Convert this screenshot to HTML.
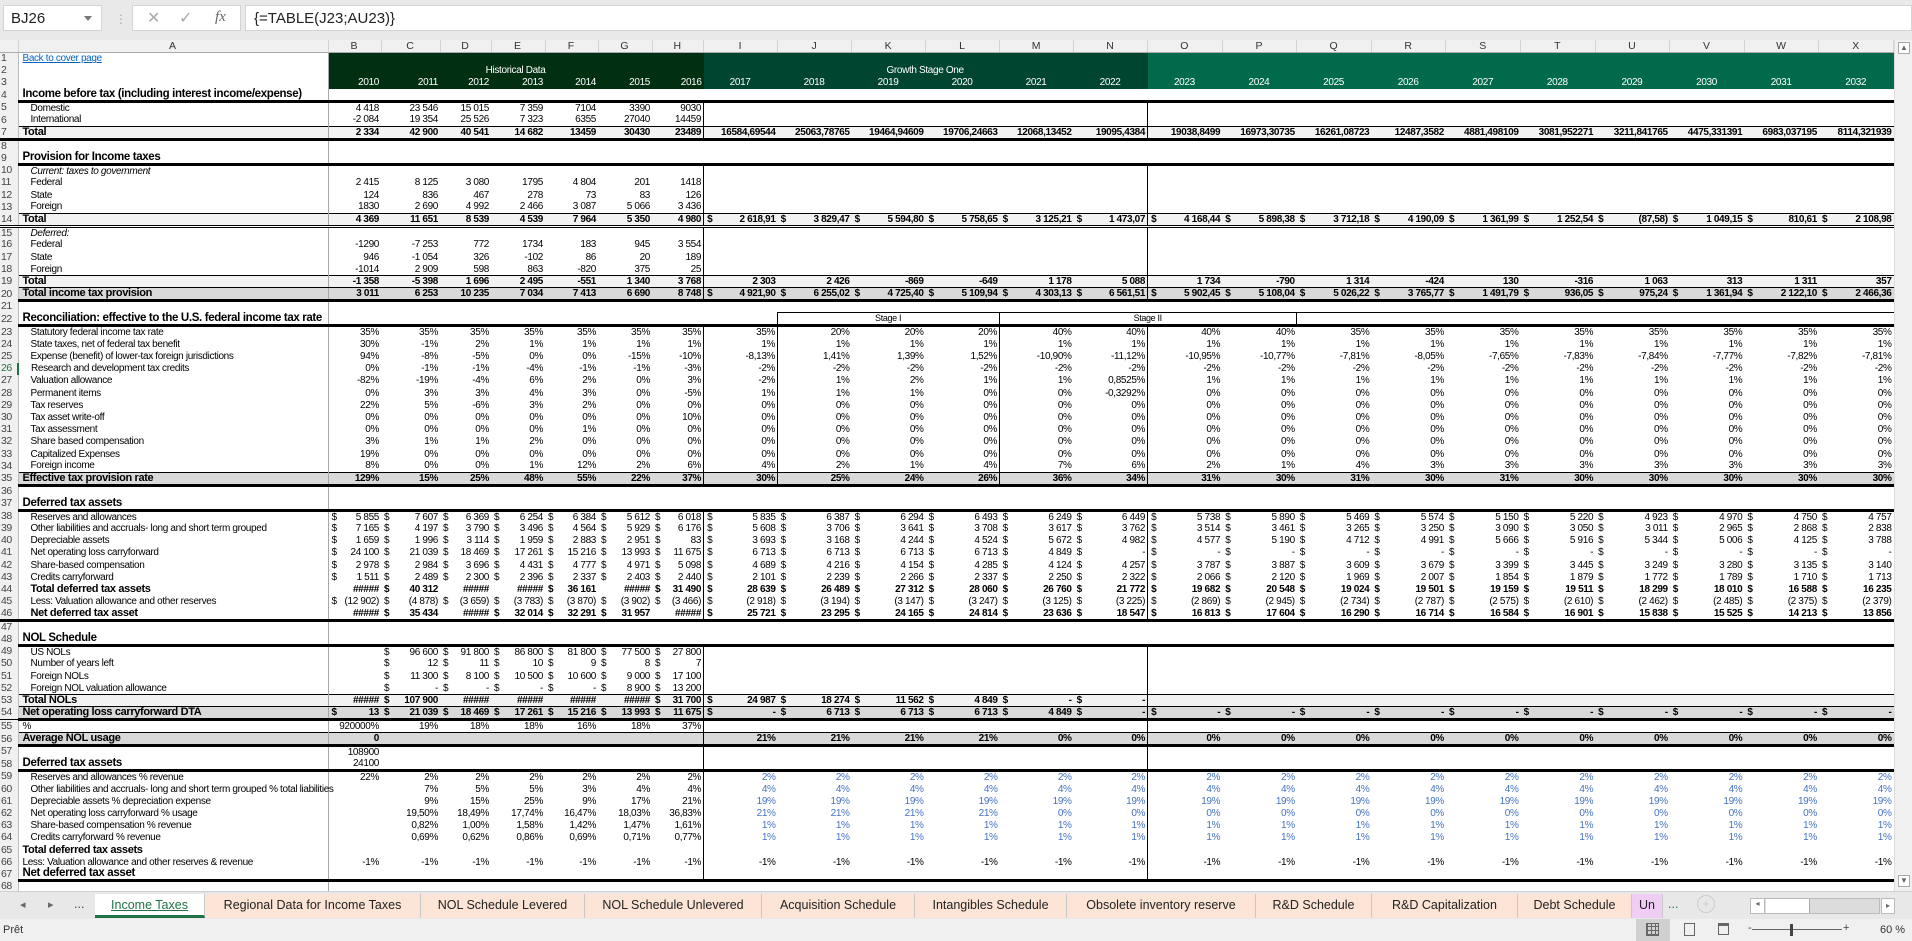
<!DOCTYPE html>
<html><head><meta charset="utf-8">
<style>
*{box-sizing:border-box;margin:0;padding:0}
body{width:1912px;height:941px;overflow:hidden;background:#fff;position:relative;font-family:"Liberation Sans Narrow","Liberation Sans",sans-serif}
#fb{position:absolute;left:0;top:0;width:1912px;height:40px;background:#e9e9e9}
#nb{position:absolute;left:3px;top:5px;width:99px;height:26px;background:#fff;border:1px solid #d4d4d4;font:15px "Liberation Sans",sans-serif;color:#222;padding:4px 0 0 7px}
#nb:after{content:"";position:absolute;right:9px;top:10px;border:4px solid transparent;border-top:5px solid #777}
#dots{position:absolute;left:115px;top:12px;color:#aaa;font:12px "Liberation Sans"}
#btns{position:absolute;left:132px;top:5px;width:109px;height:26px;background:#fff;border:1px solid #d4d4d4;color:#aaa;font:16px "Liberation Sans"}
#fx{position:absolute;left:245px;top:5px;width:1667px;height:26px;background:#fff;border:1px solid #d4d4d4;font:15px "Liberation Sans",sans-serif;color:#222;padding:4px 0 0 8px}
table{position:absolute;left:0;top:40px;border-collapse:collapse;table-layout:fixed;font-size:10px;width:1893.6px;letter-spacing:-0.35px}
td{height:12.2px;padding:0 2px 0 1px;white-space:nowrap;overflow:hidden;text-align:right;line-height:11px;color:#000}
thead td{height:12px;background:#f0f0f0;text-align:center;color:#333;font:10.5px "Liberation Sans",sans-serif;border-bottom:1px solid #ababab;border-right:1px solid #d4d4d4;line-height:12px;letter-spacing:0}
td.rh{background:#f0f0f0;text-align:left;color:#444;border-right:1px solid #bdbdbd;font-size:10.5px;padding-left:1px;border-top:none!important;border-bottom:none!important;letter-spacing:-0.5px}
tbody td:nth-child(2){border-right:1px solid #a8a8a8}
td.a{text-align:left;padding-left:4px;overflow:visible}
td.b{text-align:left;padding-left:12px;overflow:visible}
td.it{font-style:italic}
tr.hd td.a{font-weight:bold;font-size:11.5px}
tr.hd td:not(.rh){border-bottom:3px solid #000}
tr.t td:not(.rh){background:#f2f2f2;font-weight:bold;border-top:1px solid #000;border-bottom:1px solid #000}
tr.T td:not(.rh){background:#d9d9d9;font-weight:bold;border-bottom:3px solid #000;border-top:1px solid #000}
tr.t td.a,tr.T td.a{font-size:11px}
tr.v td:nth-child(10),tr.v td:nth-child(16){border-left:1px solid #000}
tr.r td:nth-child(10),tr.r td:nth-child(11),tr.r td:nth-child(14),tr.r td:nth-child(16){border-left:1px solid #000}
.g1{background:#002f12;color:#fff}.g2{background:#004530;color:#fff}.g3{background:#006a4a;color:#fff}
.gc{text-align:center}
i{font-style:normal;float:left;padding-left:2px}
.bl{color:#4472c4}
u{color:#0563c1}
#tabs{position:absolute;left:0;top:891px;width:1912px;height:28px;background:#e8e8e8;border-top:1px solid #d0d0d0;font:12.5px "Liberation Sans",sans-serif}
.tab{position:absolute;top:2px;height:24px;background:#fce4d6;color:#222;text-align:center;line-height:23px;border-right:1px solid #c8c8c8;white-space:nowrap;overflow:hidden}
#sb{position:absolute;left:0;top:919px;width:1912px;height:22px;background:#f0f0f0;font:11px "Liberation Sans",sans-serif;color:#333}
#vs{position:absolute;left:1894px;top:40px;width:18px;height:851px;background:#f0f0f0;border-left:1px solid #ddd}
</style></head><body>
<div id="fb"><div id="nb">BJ26</div><div id="dots">⋮</div><div id="btns"><span style="position:absolute;left:14px;top:2px">✕</span><span style="position:absolute;left:46px;top:2px">✓</span><span style="position:absolute;left:82px;top:3px;font:italic 15px 'Liberation Serif';color:#666">fx</span></div><div id="fx">{=TABLE(J23;AU23)}</div></div>
<table>
<colgroup><col style="width:18px"><col style="width:310px"><col style="width:53px"><col style="width:59px"><col style="width:51px"><col style="width:54px"><col style="width:53px"><col style="width:54px"><col style="width:51.6px"><col style="width:74px"><col style="width:74px"><col style="width:74px"><col style="width:74px"><col style="width:74px"><col style="width:74px"><col style="width:74.6px"><col style="width:74.6px"><col style="width:74.6px"><col style="width:74.6px"><col style="width:74.6px"><col style="width:74.6px"><col style="width:74.6px"><col style="width:74.6px"><col style="width:74.6px"><col style="width:74.6px"></colgroup>
<thead><tr><td></td><td>A</td><td>B</td><td>C</td><td>D</td><td>E</td><td>F</td><td>G</td><td>H</td><td>I</td><td>J</td><td>K</td><td>L</td><td>M</td><td>N</td><td>O</td><td>P</td><td>Q</td><td>R</td><td>S</td><td>T</td><td>U</td><td>V</td><td>W</td><td>X</td></tr></thead>
<tbody>
<tr><td class="rh">1</td><td class="a"><u>Back to cover page</u></td><td colspan="7" class="g1"></td><td colspan="6" class="g2"></td><td colspan="10" class="g3"></td></tr>
<tr><td class="rh">2</td><td></td><td colspan="7" class="g1 gc">Historical Data</td><td colspan="6" class="g2 gc">Growth Stage One</td><td colspan="10" class="g3"></td></tr>
<tr><td class="rh">3</td><td></td><td class="g1">2010</td><td class="g1">2011</td><td class="g1">2012</td><td class="g1">2013</td><td class="g1">2014</td><td class="g1">2015</td><td class="g1">2016</td><td class="g2 gc">2017</td><td class="g2 gc">2018</td><td class="g2 gc">2019</td><td class="g2 gc">2020</td><td class="g2 gc">2021</td><td class="g2 gc">2022</td><td class="g3 gc">2023</td><td class="g3 gc">2024</td><td class="g3 gc">2025</td><td class="g3 gc">2026</td><td class="g3 gc">2027</td><td class="g3 gc">2028</td><td class="g3 gc">2029</td><td class="g3 gc">2030</td><td class="g3 gc">2031</td><td class="g3 gc">2032</td></tr>
<tr class="hd"><td class="rh">4</td><td class="a">Income before tax (including interest income/expense)</td><td colspan="23"></td></tr>
<tr class="v"><td class="rh">5</td><td class="b">Domestic</td><td>4 418</td><td>23 546</td><td>15 015</td><td>7 359</td><td>7104</td><td>3390</td><td>9030</td><td></td><td></td><td></td><td></td><td></td><td></td><td></td><td></td><td></td><td></td><td></td><td></td><td></td><td></td><td></td><td></td></tr>
<tr class="v"><td class="rh">6</td><td class="b">International</td><td>-2 084</td><td>19 354</td><td>25 526</td><td>7 323</td><td>6355</td><td>27040</td><td>14459</td><td></td><td></td><td></td><td></td><td></td><td></td><td></td><td></td><td></td><td></td><td></td><td></td><td></td><td></td><td></td><td></td></tr>
<tr class="t v" style="border-bottom:3px solid #000"><td class="rh">7</td><td class="a">Total</td><td>2 334</td><td>42 900</td><td>40 541</td><td>14 682</td><td>13459</td><td>30430</td><td>23489</td><td>16584,69544</td><td>25063,78765</td><td>19464,94609</td><td>19706,24663</td><td>12068,13452</td><td>19095,4384</td><td>19038,8499</td><td>16973,30735</td><td>16261,08723</td><td>12487,3582</td><td>4881,498109</td><td>3081,952271</td><td>3211,841765</td><td>4475,331391</td><td>6983,037195</td><td>8114,321939</td></tr>
<tr><td class="rh">8</td><td></td><td colspan="23"></td></tr>
<tr class="hd"><td class="rh">9</td><td class="a">Provision for Income taxes</td><td colspan="23"></td></tr>
<tr class="v"><td class="rh">10</td><td class="b it">Current: taxes to government</td><td></td><td></td><td></td><td></td><td></td><td></td><td></td><td></td><td></td><td></td><td></td><td></td><td></td><td></td><td></td><td></td><td></td><td></td><td></td><td></td><td></td><td></td><td></td></tr>
<tr class="v"><td class="rh">11</td><td class="b">Federal</td><td>2 415</td><td>8 125</td><td>3 080</td><td>1795</td><td>4 804</td><td>201</td><td>1418</td><td></td><td></td><td></td><td></td><td></td><td></td><td></td><td></td><td></td><td></td><td></td><td></td><td></td><td></td><td></td><td></td></tr>
<tr class="v"><td class="rh">12</td><td class="b">State</td><td>124</td><td>836</td><td>467</td><td>278</td><td>73</td><td>83</td><td>126</td><td></td><td></td><td></td><td></td><td></td><td></td><td></td><td></td><td></td><td></td><td></td><td></td><td></td><td></td><td></td><td></td></tr>
<tr class="v"><td class="rh">13</td><td class="b">Foreign</td><td>1830</td><td>2 690</td><td>4 992</td><td>2 466</td><td>3 087</td><td>5 066</td><td>3 436</td><td></td><td></td><td></td><td></td><td></td><td></td><td></td><td></td><td></td><td></td><td></td><td></td><td></td><td></td><td></td><td></td></tr>
<tr class="t v" style="border-bottom:3px double #000"><td class="rh">14</td><td class="a">Total</td><td>4 369</td><td>11 651</td><td>8 539</td><td>4 539</td><td>7 964</td><td>5 350</td><td>4 980</td><td><i>$</i>2 618,91</td><td><i>$</i>3 829,47</td><td><i>$</i>5 594,80</td><td><i>$</i>5 758,65</td><td><i>$</i>3 125,21</td><td><i>$</i>1 473,07</td><td><i>$</i>4 168,44</td><td><i>$</i>5 898,38</td><td><i>$</i>3 712,18</td><td><i>$</i>4 190,09</td><td><i>$</i>1 361,99</td><td><i>$</i>1 252,54</td><td><i>$</i>(87,58)</td><td><i>$</i>1 049,15</td><td><i>$</i>810,61</td><td><i>$</i>2 108,98</td></tr>
<tr class="v"><td class="rh">15</td><td class="b it">Deferred:</td><td></td><td></td><td></td><td></td><td></td><td></td><td></td><td></td><td></td><td></td><td></td><td></td><td></td><td></td><td></td><td></td><td></td><td></td><td></td><td></td><td></td><td></td><td></td></tr>
<tr class="v"><td class="rh">16</td><td class="b">Federal</td><td>-1290</td><td>-7 253</td><td>772</td><td>1734</td><td>183</td><td>945</td><td>3 554</td><td></td><td></td><td></td><td></td><td></td><td></td><td></td><td></td><td></td><td></td><td></td><td></td><td></td><td></td><td></td><td></td></tr>
<tr class="v"><td class="rh">17</td><td class="b">State</td><td>946</td><td>-1 054</td><td>326</td><td>-102</td><td>86</td><td>20</td><td>189</td><td></td><td></td><td></td><td></td><td></td><td></td><td></td><td></td><td></td><td></td><td></td><td></td><td></td><td></td><td></td><td></td></tr>
<tr class="v"><td class="rh">18</td><td class="b">Foreign</td><td>-1014</td><td>2 909</td><td>598</td><td>863</td><td>-820</td><td>375</td><td>25</td><td></td><td></td><td></td><td></td><td></td><td></td><td></td><td></td><td></td><td></td><td></td><td></td><td></td><td></td><td></td><td></td></tr>
<tr class="t v"><td class="rh">19</td><td class="a">Total</td><td>-1 358</td><td>-5 398</td><td>1 696</td><td>2 495</td><td>-551</td><td>1 340</td><td>3 768</td><td>2 303</td><td>2 426</td><td>-869</td><td>-649</td><td>1 178</td><td>5 088</td><td>1 734</td><td>-790</td><td>1 314</td><td>-424</td><td>130</td><td>-316</td><td>1 063</td><td>313</td><td>1 311</td><td>357</td></tr>
<tr class="T v"><td class="rh">20</td><td class="a">Total income tax provision</td><td>3 011</td><td>6 253</td><td>10 235</td><td>7 034</td><td>7 413</td><td>6 690</td><td>8 748</td><td><i>$</i>4 921,90</td><td><i>$</i>6 255,02</td><td><i>$</i>4 725,40</td><td><i>$</i>5 109,94</td><td><i>$</i>4 303,13</td><td><i>$</i>6 561,51</td><td><i>$</i>5 902,45</td><td><i>$</i>5 108,04</td><td><i>$</i>5 026,22</td><td><i>$</i>3 765,77</td><td><i>$</i>1 491,79</td><td><i>$</i>936,05</td><td><i>$</i>975,24</td><td><i>$</i>1 361,94</td><td><i>$</i>2 122,10</td><td><i>$</i>2 466,36</td></tr>
<tr><td class="rh">21</td><td></td><td colspan="23"></td></tr>
<tr class="hd"><td class="rh">22</td><td class="a">Reconciliation: effective to the U.S. federal income tax rate</td><td></td><td></td><td></td><td></td><td></td><td></td><td></td><td></td><td colspan="3" style="text-align:center;border-top:1px solid #000;border-left:1px solid #000;font-size:9px">Stage I</td><td colspan="4" style="text-align:center;border-top:1px solid #000;border-left:1px solid #000;font-size:9px">Stage II</td><td colspan="8" style="border-top:1px solid #000;border-left:1px solid #000"></td></tr>
<tr class="r"><td class="rh">23</td><td class="b">Statutory federal income tax rate</td><td>35%</td><td>35%</td><td>35%</td><td>35%</td><td>35%</td><td>35%</td><td>35%</td><td>35%</td><td>20%</td><td>20%</td><td>20%</td><td>40%</td><td>40%</td><td>40%</td><td>40%</td><td>35%</td><td>35%</td><td>35%</td><td>35%</td><td>35%</td><td>35%</td><td>35%</td><td>35%</td></tr>
<tr class="r"><td class="rh">24</td><td class="b">State taxes, net of federal tax benefit</td><td>30%</td><td>-1%</td><td>2%</td><td>1%</td><td>1%</td><td>1%</td><td>1%</td><td>1%</td><td>1%</td><td>1%</td><td>1%</td><td>1%</td><td>1%</td><td>1%</td><td>1%</td><td>1%</td><td>1%</td><td>1%</td><td>1%</td><td>1%</td><td>1%</td><td>1%</td><td>1%</td></tr>
<tr class="r"><td class="rh">25</td><td class="b">Expense (benefit) of lower-tax foreign jurisdictions</td><td>94%</td><td>-8%</td><td>-5%</td><td>0%</td><td>0%</td><td>-15%</td><td>-10%</td><td>-8,13%</td><td>1,41%</td><td>1,39%</td><td>1,52%</td><td>-10,90%</td><td>-11,12%</td><td>-10,95%</td><td>-10,77%</td><td>-7,81%</td><td>-8,05%</td><td>-7,65%</td><td>-7,83%</td><td>-7,84%</td><td>-7,77%</td><td>-7,82%</td><td>-7,81%</td></tr>
<tr class="r"><td class="rh" style="color:#217346;border-right:2px solid #217346">26</td><td class="b">Research and development tax credits</td><td>0%</td><td>-1%</td><td>-1%</td><td>-4%</td><td>-1%</td><td>-1%</td><td>-3%</td><td>-2%</td><td>-2%</td><td>-2%</td><td>-2%</td><td>-2%</td><td>-2%</td><td>-2%</td><td>-2%</td><td>-2%</td><td>-2%</td><td>-2%</td><td>-2%</td><td>-2%</td><td>-2%</td><td>-2%</td><td>-2%</td></tr>
<tr class="r"><td class="rh">27</td><td class="b">Valuation allowance</td><td>-82%</td><td>-19%</td><td>-4%</td><td>6%</td><td>2%</td><td>0%</td><td>3%</td><td>-2%</td><td>1%</td><td>2%</td><td>1%</td><td>1%</td><td>0,8525%</td><td>1%</td><td>1%</td><td>1%</td><td>1%</td><td>1%</td><td>1%</td><td>1%</td><td>1%</td><td>1%</td><td>1%</td></tr>
<tr class="r"><td class="rh">28</td><td class="b">Permanent items</td><td>0%</td><td>3%</td><td>3%</td><td>4%</td><td>3%</td><td>0%</td><td>-5%</td><td>1%</td><td>1%</td><td>1%</td><td>0%</td><td>0%</td><td>-0,3292%</td><td>0%</td><td>0%</td><td>0%</td><td>0%</td><td>0%</td><td>0%</td><td>0%</td><td>0%</td><td>0%</td><td>0%</td></tr>
<tr class="r"><td class="rh">29</td><td class="b">Tax reserves</td><td>22%</td><td>5%</td><td>-6%</td><td>3%</td><td>2%</td><td>0%</td><td>0%</td><td>0%</td><td>0%</td><td>0%</td><td>0%</td><td>0%</td><td>0%</td><td>0%</td><td>0%</td><td>0%</td><td>0%</td><td>0%</td><td>0%</td><td>0%</td><td>0%</td><td>0%</td><td>0%</td></tr>
<tr class="r"><td class="rh">30</td><td class="b">Tax asset write-off</td><td>0%</td><td>0%</td><td>0%</td><td>0%</td><td>0%</td><td>0%</td><td>10%</td><td>0%</td><td>0%</td><td>0%</td><td>0%</td><td>0%</td><td>0%</td><td>0%</td><td>0%</td><td>0%</td><td>0%</td><td>0%</td><td>0%</td><td>0%</td><td>0%</td><td>0%</td><td>0%</td></tr>
<tr class="r"><td class="rh">31</td><td class="b">Tax assessment</td><td>0%</td><td>0%</td><td>0%</td><td>0%</td><td>1%</td><td>0%</td><td>0%</td><td>0%</td><td>0%</td><td>0%</td><td>0%</td><td>0%</td><td>0%</td><td>0%</td><td>0%</td><td>0%</td><td>0%</td><td>0%</td><td>0%</td><td>0%</td><td>0%</td><td>0%</td><td>0%</td></tr>
<tr class="r"><td class="rh">32</td><td class="b">Share based compensation</td><td>3%</td><td>1%</td><td>1%</td><td>2%</td><td>0%</td><td>0%</td><td>0%</td><td>0%</td><td>0%</td><td>0%</td><td>0%</td><td>0%</td><td>0%</td><td>0%</td><td>0%</td><td>0%</td><td>0%</td><td>0%</td><td>0%</td><td>0%</td><td>0%</td><td>0%</td><td>0%</td></tr>
<tr class="r"><td class="rh">33</td><td class="b">Capitalized Expenses</td><td>19%</td><td>0%</td><td>0%</td><td>0%</td><td>0%</td><td>0%</td><td>0%</td><td>0%</td><td>0%</td><td>0%</td><td>0%</td><td>0%</td><td>0%</td><td>0%</td><td>0%</td><td>0%</td><td>0%</td><td>0%</td><td>0%</td><td>0%</td><td>0%</td><td>0%</td><td>0%</td></tr>
<tr class="r"><td class="rh">34</td><td class="b">Foreign income</td><td>8%</td><td>0%</td><td>0%</td><td>1%</td><td>12%</td><td>2%</td><td>6%</td><td>4%</td><td>2%</td><td>1%</td><td>4%</td><td>7%</td><td>6%</td><td>2%</td><td>1%</td><td>4%</td><td>3%</td><td>3%</td><td>3%</td><td>3%</td><td>3%</td><td>3%</td><td>3%</td></tr>
<tr class="T r"><td class="rh">35</td><td class="a">Effective tax provision rate</td><td>129%</td><td>15%</td><td>25%</td><td>48%</td><td>55%</td><td>22%</td><td>37%</td><td>30%</td><td>25%</td><td>24%</td><td>26%</td><td>36%</td><td>34%</td><td>31%</td><td>30%</td><td>31%</td><td>30%</td><td>31%</td><td>30%</td><td>30%</td><td>30%</td><td>30%</td><td>30%</td></tr>
<tr><td class="rh">36</td><td></td><td colspan="23"></td></tr>
<tr class="hd"><td class="rh">37</td><td class="a">Deferred tax assets</td><td colspan="23"></td></tr>
<tr class="v"><td class="rh">38</td><td class="b">Reserves and allowances</td><td><i>$</i>5 855</td><td><i>$</i>7 607</td><td><i>$</i>6 369</td><td><i>$</i>6 254</td><td><i>$</i>6 384</td><td><i>$</i>5 612</td><td><i>$</i>6 018</td><td><i>$</i>5 835</td><td><i>$</i>6 387</td><td><i>$</i>6 294</td><td><i>$</i>6 493</td><td><i>$</i>6 249</td><td><i>$</i>6 449</td><td><i>$</i>5 738</td><td><i>$</i>5 890</td><td><i>$</i>5 469</td><td><i>$</i>5 574</td><td><i>$</i>5 150</td><td><i>$</i>5 220</td><td><i>$</i>4 923</td><td><i>$</i>4 970</td><td><i>$</i>4 750</td><td><i>$</i>4 757</td></tr>
<tr class="v"><td class="rh">39</td><td class="b">Other liabilities and accruals- long and short term grouped</td><td><i>$</i>7 165</td><td><i>$</i>4 197</td><td><i>$</i>3 790</td><td><i>$</i>3 496</td><td><i>$</i>4 564</td><td><i>$</i>5 929</td><td><i>$</i>6 176</td><td><i>$</i>5 608</td><td><i>$</i>3 706</td><td><i>$</i>3 641</td><td><i>$</i>3 708</td><td><i>$</i>3 617</td><td><i>$</i>3 762</td><td><i>$</i>3 514</td><td><i>$</i>3 461</td><td><i>$</i>3 265</td><td><i>$</i>3 250</td><td><i>$</i>3 090</td><td><i>$</i>3 050</td><td><i>$</i>3 011</td><td><i>$</i>2 965</td><td><i>$</i>2 868</td><td><i>$</i>2 838</td></tr>
<tr class="v"><td class="rh">40</td><td class="b">Depreciable assets</td><td><i>$</i>1 659</td><td><i>$</i>1 996</td><td><i>$</i>3 114</td><td><i>$</i>1 959</td><td><i>$</i>2 883</td><td><i>$</i>2 951</td><td><i>$</i>83</td><td><i>$</i>3 693</td><td><i>$</i>3 168</td><td><i>$</i>4 244</td><td><i>$</i>4 524</td><td><i>$</i>5 672</td><td><i>$</i>4 982</td><td><i>$</i>4 577</td><td><i>$</i>5 190</td><td><i>$</i>4 712</td><td><i>$</i>4 991</td><td><i>$</i>5 666</td><td><i>$</i>5 916</td><td><i>$</i>5 344</td><td><i>$</i>5 006</td><td><i>$</i>4 125</td><td><i>$</i>3 788</td></tr>
<tr class="v"><td class="rh">41</td><td class="b">Net operating loss carryforward</td><td><i>$</i>24 100</td><td><i>$</i>21 039</td><td><i>$</i>18 469</td><td><i>$</i>17 261</td><td><i>$</i>15 216</td><td><i>$</i>13 993</td><td><i>$</i>11 675</td><td><i>$</i>6 713</td><td><i>$</i>6 713</td><td><i>$</i>6 713</td><td><i>$</i>6 713</td><td><i>$</i>4 849</td><td><i>$</i>- </td><td><i>$</i>- </td><td><i>$</i>- </td><td><i>$</i>- </td><td><i>$</i>- </td><td><i>$</i>- </td><td><i>$</i>- </td><td><i>$</i>- </td><td><i>$</i>- </td><td><i>$</i>- </td><td><i>$</i>- </td></tr>
<tr class="v"><td class="rh">42</td><td class="b">Share-based compensation</td><td><i>$</i>2 978</td><td><i>$</i>2 984</td><td><i>$</i>3 696</td><td><i>$</i>4 431</td><td><i>$</i>4 777</td><td><i>$</i>4 971</td><td><i>$</i>5 098</td><td><i>$</i>4 689</td><td><i>$</i>4 216</td><td><i>$</i>4 154</td><td><i>$</i>4 285</td><td><i>$</i>4 124</td><td><i>$</i>4 257</td><td><i>$</i>3 787</td><td><i>$</i>3 887</td><td><i>$</i>3 609</td><td><i>$</i>3 679</td><td><i>$</i>3 399</td><td><i>$</i>3 445</td><td><i>$</i>3 249</td><td><i>$</i>3 280</td><td><i>$</i>3 135</td><td><i>$</i>3 140</td></tr>
<tr class="v"><td class="rh">43</td><td class="b">Credits carryforward</td><td><i>$</i>1 511</td><td><i>$</i>2 489</td><td><i>$</i>2 300</td><td><i>$</i>2 396</td><td><i>$</i>2 337</td><td><i>$</i>2 403</td><td><i>$</i>2 440</td><td><i>$</i>2 101</td><td><i>$</i>2 239</td><td><i>$</i>2 266</td><td><i>$</i>2 337</td><td><i>$</i>2 250</td><td><i>$</i>2 322</td><td><i>$</i>2 066</td><td><i>$</i>2 120</td><td><i>$</i>1 969</td><td><i>$</i>2 007</td><td><i>$</i>1 854</td><td><i>$</i>1 879</td><td><i>$</i>1 772</td><td><i>$</i>1 789</td><td><i>$</i>1 710</td><td><i>$</i>1 713</td></tr>
<tr class="v" style="font-weight:bold"><td class="rh" style="font-weight:normal">44</td><td class="b" style="font-size:11px">Total deferred tax assets</td><td>#####</td><td><i>$</i>40 312</td><td>#####</td><td>#####</td><td><i>$</i>36 161</td><td>#####</td><td><i>$</i>31 490</td><td><i>$</i>28 639</td><td><i>$</i>26 489</td><td><i>$</i>27 312</td><td><i>$</i>28 060</td><td><i>$</i>26 760</td><td><i>$</i>21 772</td><td><i>$</i>19 682</td><td><i>$</i>20 548</td><td><i>$</i>19 024</td><td><i>$</i>19 501</td><td><i>$</i>19 159</td><td><i>$</i>19 511</td><td><i>$</i>18 299</td><td><i>$</i>18 010</td><td><i>$</i>16 588</td><td><i>$</i>16 235</td></tr>
<tr class="v"><td class="rh">45</td><td class="b">Less: Valuation allowance and other reserves</td><td><i>$</i>(12 902)</td><td><i>$</i>(4 878)</td><td><i>$</i>(3 659)</td><td><i>$</i>(3 783)</td><td><i>$</i>(3 870)</td><td><i>$</i>(3 902)</td><td><i>$</i>(3 466)</td><td><i>$</i>(2 918)</td><td><i>$</i>(3 194)</td><td><i>$</i>(3 147)</td><td><i>$</i>(3 247)</td><td><i>$</i>(3 125)</td><td><i>$</i>(3 225)</td><td><i>$</i>(2 869)</td><td><i>$</i>(2 945)</td><td><i>$</i>(2 734)</td><td><i>$</i>(2 787)</td><td><i>$</i>(2 575)</td><td><i>$</i>(2 610)</td><td><i>$</i>(2 462)</td><td><i>$</i>(2 485)</td><td><i>$</i>(2 375)</td><td><i>$</i>(2 379)</td></tr>
<tr class="v" style="font-weight:bold;border-bottom:3px solid #000"><td class="rh" style="font-weight:normal">46</td><td class="b" style="font-size:11px">Net deferred tax asset</td><td>#####</td><td><i>$</i>35 434</td><td>#####</td><td><i>$</i>32 014</td><td><i>$</i>32 291</td><td><i>$</i>31 957</td><td>#####</td><td><i>$</i>25 721</td><td><i>$</i>23 295</td><td><i>$</i>24 165</td><td><i>$</i>24 814</td><td><i>$</i>23 636</td><td><i>$</i>18 547</td><td><i>$</i>16 813</td><td><i>$</i>17 604</td><td><i>$</i>16 290</td><td><i>$</i>16 714</td><td><i>$</i>16 584</td><td><i>$</i>16 901</td><td><i>$</i>15 838</td><td><i>$</i>15 525</td><td><i>$</i>14 213</td><td><i>$</i>13 856</td></tr>
<tr><td class="rh">47</td><td></td><td colspan="23"></td></tr>
<tr class="hd"><td class="rh">48</td><td class="a">NOL Schedule</td><td colspan="23"></td></tr>
<tr class="v"><td class="rh">49</td><td class="b">US NOLs</td><td></td><td><i>$</i>96 600</td><td><i>$</i>91 800</td><td><i>$</i>86 800</td><td><i>$</i>81 800</td><td><i>$</i>77 500</td><td><i>$</i>27 800</td><td></td><td></td><td></td><td></td><td></td><td></td><td></td><td></td><td></td><td></td><td></td><td></td><td></td><td></td><td></td><td></td></tr>
<tr class="v"><td class="rh">50</td><td class="b">Number of years left</td><td></td><td><i>$</i>12</td><td><i>$</i>11</td><td><i>$</i>10</td><td><i>$</i>9</td><td><i>$</i>8</td><td><i>$</i>7</td><td></td><td></td><td></td><td></td><td></td><td></td><td></td><td></td><td></td><td></td><td></td><td></td><td></td><td></td><td></td><td></td></tr>
<tr class="v"><td class="rh">51</td><td class="b">Foreign NOLs</td><td></td><td><i>$</i>11 300</td><td><i>$</i>8 100</td><td><i>$</i>10 500</td><td><i>$</i>10 600</td><td><i>$</i>9 000</td><td><i>$</i>17 100</td><td></td><td></td><td></td><td></td><td></td><td></td><td></td><td></td><td></td><td></td><td></td><td></td><td></td><td></td><td></td><td></td></tr>
<tr class="v"><td class="rh">52</td><td class="b">Foreign NOL valuation allowance</td><td></td><td><i>$</i>- </td><td><i>$</i>- </td><td><i>$</i>- </td><td><i>$</i>- </td><td><i>$</i>8 900</td><td><i>$</i>13 200</td><td></td><td></td><td></td><td></td><td></td><td></td><td></td><td></td><td></td><td></td><td></td><td></td><td></td><td></td><td></td><td></td></tr>
<tr class="t v"><td class="rh">53</td><td class="a">Total NOLs</td><td>#####</td><td><i>$</i>107 900</td><td>#####</td><td>#####</td><td>#####</td><td>#####</td><td><i>$</i>31 700</td><td><i>$</i>24 987</td><td><i>$</i>18 274</td><td><i>$</i>11 562</td><td><i>$</i>4 849</td><td><i>$</i>- </td><td><i>$</i>- </td><td></td><td></td><td></td><td></td><td></td><td></td><td></td><td></td><td></td><td></td></tr>
<tr class="T v" style="border-bottom:1px solid #000"><td class="rh">54</td><td class="a">Net operating loss carryforward DTA</td><td><i>$</i>13</td><td><i>$</i>21 039</td><td><i>$</i>18 469</td><td><i>$</i>17 261</td><td><i>$</i>15 216</td><td><i>$</i>13 993</td><td><i>$</i>11 675</td><td><i>$</i>- </td><td><i>$</i>6 713</td><td><i>$</i>6 713</td><td><i>$</i>6 713</td><td><i>$</i>4 849</td><td><i>$</i>- </td><td><i>$</i>- </td><td><i>$</i>- </td><td><i>$</i>- </td><td><i>$</i>- </td><td><i>$</i>- </td><td><i>$</i>- </td><td><i>$</i>- </td><td><i>$</i>- </td><td><i>$</i>- </td><td><i>$</i>- </td></tr>
<tr class="v"><td class="rh">55</td><td class="a">%</td><td>920000%</td><td>19%</td><td>18%</td><td>18%</td><td>16%</td><td>18%</td><td>37%</td><td></td><td></td><td></td><td></td><td></td><td></td><td></td><td></td><td></td><td></td><td></td><td></td><td></td><td></td><td></td><td></td></tr>
<tr class="T v"><td class="rh">56</td><td class="a">Average NOL usage</td><td>0</td><td></td><td></td><td></td><td></td><td></td><td></td><td>21%</td><td>21%</td><td>21%</td><td>21%</td><td>0%</td><td>0%</td><td>0%</td><td>0%</td><td>0%</td><td>0%</td><td>0%</td><td>0%</td><td>0%</td><td>0%</td><td>0%</td><td>0%</td></tr>
<tr class="v"><td class="rh">57</td><td></td><td>108900</td><td></td><td></td><td></td><td></td><td></td><td></td><td></td><td></td><td></td><td></td><td></td><td></td><td></td><td></td><td></td><td></td><td></td><td></td><td></td><td></td><td></td><td></td></tr>
<tr class="hd v"><td class="rh">58</td><td class="a">Deferred tax assets</td><td>24100</td><td></td><td></td><td></td><td></td><td></td><td></td><td></td><td></td><td></td><td></td><td></td><td></td><td></td><td></td><td></td><td></td><td></td><td></td><td></td><td></td><td></td><td></td></tr>
<tr class="v"><td class="rh">59</td><td class="b">Reserves and allowances % revenue</td><td>22%</td><td>2%</td><td>2%</td><td>2%</td><td>2%</td><td>2%</td><td>2%</td><td class="bl">2%</td><td class="bl">2%</td><td class="bl">2%</td><td class="bl">2%</td><td class="bl">2%</td><td class="bl">2%</td><td class="bl">2%</td><td class="bl">2%</td><td class="bl">2%</td><td class="bl">2%</td><td class="bl">2%</td><td class="bl">2%</td><td class="bl">2%</td><td class="bl">2%</td><td class="bl">2%</td><td class="bl">2%</td></tr>
<tr class="v"><td class="rh">60</td><td class="b">Other liabilities and accruals- long and short term grouped % total liabilities</td><td></td><td>7%</td><td>5%</td><td>5%</td><td>3%</td><td>4%</td><td>4%</td><td class="bl">4%</td><td class="bl">4%</td><td class="bl">4%</td><td class="bl">4%</td><td class="bl">4%</td><td class="bl">4%</td><td class="bl">4%</td><td class="bl">4%</td><td class="bl">4%</td><td class="bl">4%</td><td class="bl">4%</td><td class="bl">4%</td><td class="bl">4%</td><td class="bl">4%</td><td class="bl">4%</td><td class="bl">4%</td></tr>
<tr class="v"><td class="rh">61</td><td class="b">Depreciable assets % depreciation expense</td><td></td><td>9%</td><td>15%</td><td>25%</td><td>9%</td><td>17%</td><td>21%</td><td class="bl">19%</td><td class="bl">19%</td><td class="bl">19%</td><td class="bl">19%</td><td class="bl">19%</td><td class="bl">19%</td><td class="bl">19%</td><td class="bl">19%</td><td class="bl">19%</td><td class="bl">19%</td><td class="bl">19%</td><td class="bl">19%</td><td class="bl">19%</td><td class="bl">19%</td><td class="bl">19%</td><td class="bl">19%</td></tr>
<tr class="v"><td class="rh">62</td><td class="b">Net operating loss carryforward % usage</td><td></td><td>19,50%</td><td>18,49%</td><td>17,74%</td><td>16,47%</td><td>18,03%</td><td>36,83%</td><td class="bl">21%</td><td class="bl">21%</td><td class="bl">21%</td><td class="bl">21%</td><td class="bl">0%</td><td class="bl">0%</td><td class="bl">0%</td><td class="bl">0%</td><td class="bl">0%</td><td class="bl">0%</td><td class="bl">0%</td><td class="bl">0%</td><td class="bl">0%</td><td class="bl">0%</td><td class="bl">0%</td><td class="bl">0%</td></tr>
<tr class="v"><td class="rh">63</td><td class="b">Share-based compensation % revenue</td><td></td><td>0,82%</td><td>1,00%</td><td>1,58%</td><td>1,42%</td><td>1,47%</td><td>1,61%</td><td class="bl">1%</td><td class="bl">1%</td><td class="bl">1%</td><td class="bl">1%</td><td class="bl">1%</td><td class="bl">1%</td><td class="bl">1%</td><td class="bl">1%</td><td class="bl">1%</td><td class="bl">1%</td><td class="bl">1%</td><td class="bl">1%</td><td class="bl">1%</td><td class="bl">1%</td><td class="bl">1%</td><td class="bl">1%</td></tr>
<tr class="v"><td class="rh">64</td><td class="b">Credits carryforward % revenue</td><td></td><td>0,69%</td><td>0,62%</td><td>0,86%</td><td>0,69%</td><td>0,71%</td><td>0,77%</td><td class="bl">1%</td><td class="bl">1%</td><td class="bl">1%</td><td class="bl">1%</td><td class="bl">1%</td><td class="bl">1%</td><td class="bl">1%</td><td class="bl">1%</td><td class="bl">1%</td><td class="bl">1%</td><td class="bl">1%</td><td class="bl">1%</td><td class="bl">1%</td><td class="bl">1%</td><td class="bl">1%</td><td class="bl">1%</td></tr>
<tr class="v"><td class="rh">65</td><td class="a" style="font-weight:bold;font-size:11px">Total deferred tax assets</td><td></td><td></td><td></td><td></td><td></td><td></td><td></td><td></td><td></td><td></td><td></td><td></td><td></td><td></td><td></td><td></td><td></td><td></td><td></td><td></td><td></td><td></td><td></td></tr>
<tr class="v"><td class="rh">66</td><td class="a">Less: Valuation allowance and other reserves &amp; revenue</td><td>-1%</td><td>-1%</td><td>-1%</td><td>-1%</td><td>-1%</td><td>-1%</td><td>-1%</td><td>-1%</td><td>-1%</td><td>-1%</td><td>-1%</td><td>-1%</td><td>-1%</td><td>-1%</td><td>-1%</td><td>-1%</td><td>-1%</td><td>-1%</td><td>-1%</td><td>-1%</td><td>-1%</td><td>-1%</td><td>-1%</td></tr>
<tr class="hd v"><td class="rh">67</td><td class="a">Net deferred tax asset</td><td></td><td></td><td></td><td></td><td></td><td></td><td></td><td></td><td></td><td></td><td></td><td></td><td></td><td></td><td></td><td></td><td></td><td></td><td></td><td></td><td></td><td></td><td></td></tr>
<tr><td class="rh">68</td><td></td><td colspan="23"></td></tr>
<tr><td class="rh">69</td><td></td><td colspan="23"></td></tr>
</tbody></table>
<div id="vs"><div style="position:absolute;top:2px;left:3px;width:12px;height:12px;border:1px solid #aaa;background:#fff;font-size:8px;text-align:center;color:#666">▲</div><div style="position:absolute;top:835px;left:3px;width:12px;height:12px;border:1px solid #aaa;background:#fff;font-size:8px;text-align:center;color:#666">▼</div></div>
<div id="tabs">
<span style="position:absolute;left:20px;top:6px;color:#666;font-size:11px">◂</span><span style="position:absolute;left:48px;top:6px;color:#666;font-size:11px">▸</span><span style="position:absolute;left:74px;top:5px;color:#444">...</span>
<div class="tab" style="left:95px;width:110px;background:#fff;color:#217346;text-decoration:underline;border-bottom:3px solid #217346">Income Taxes</div>
<div class="tab" style="left:205px;width:216px">Regional Data for Income Taxes</div>
<div class="tab" style="left:421px;width:164px">NOL Schedule Levered</div>
<div class="tab" style="left:585px;width:177px">NOL Schedule Unlevered</div>
<div class="tab" style="left:762px;width:153px">Acquisition Schedule</div>
<div class="tab" style="left:915px;width:152px">Intangibles Schedule</div>
<div class="tab" style="left:1067px;width:189px">Obsolete inventory reserve</div>
<div class="tab" style="left:1256px;width:116px">R&amp;D Schedule</div>
<div class="tab" style="left:1372px;width:146px">R&amp;D Capitalization</div>
<div class="tab" style="left:1518px;width:114px">Debt Schedule</div>
<div class="tab" style="left:1632px;width:31px;background:#efcdf5">Un</div>
<span style="position:absolute;left:1668px;top:5px;color:#217346">...</span>
<span style="position:absolute;left:1697px;top:3px;width:18px;height:18px;border:1px solid #ccc;border-radius:50%;color:#ccc;text-align:center;line-height:16px">+</span>
<div style="position:absolute;left:1750px;top:6px;width:130px;height:16px;background:#dcdcdc;border:1px solid #bbb"><div style="position:absolute;left:0;top:0;width:14px;height:14px;background:#fff;border-right:1px solid #bbb;font-size:8px;text-align:center;color:#666">◂</div><div style="position:absolute;left:15px;top:0;width:44px;height:14px;background:#fff;border-right:1px solid #aaa"></div></div>
<div style="position:absolute;left:1881px;top:6px;width:14px;height:16px;background:#fff;border:1px solid #bbb;font-size:8px;text-align:center;color:#666;line-height:14px">▸</div>
</div>
<div id="sb"><span style="position:absolute;left:3px;top:5px">Prêt</span>
<div style="position:absolute;left:1636px;top:0;width:34px;height:22px;background:#d0d0d0"></div>
<span style="position:absolute;left:1646px;top:4px;width:13px;height:13px;border:1px solid #666;background:repeating-linear-gradient(90deg,#666 0 1px,transparent 1px 4px),repeating-linear-gradient(0deg,#666 0 1px,transparent 1px 4px)"></span>
<span style="position:absolute;left:1684px;top:4px;width:11px;height:13px;border:1px solid #666"></span>
<span style="position:absolute;left:1718px;top:4px;width:11px;height:12px;border:1px solid #666;border-top:3px solid #666"></span>
<span style="position:absolute;left:1752px;top:10px;width:90px;height:1px;background:#666"></span>
<span style="position:absolute;left:1790px;top:5px;width:3px;height:12px;background:#444"></span>
<span style="position:absolute;left:1748px;top:3px;color:#444">-</span><span style="position:absolute;left:1843px;top:3px;color:#444">+</span>
<span style="position:absolute;left:1880px;top:5px">60 %</span></div>
</body></html>
